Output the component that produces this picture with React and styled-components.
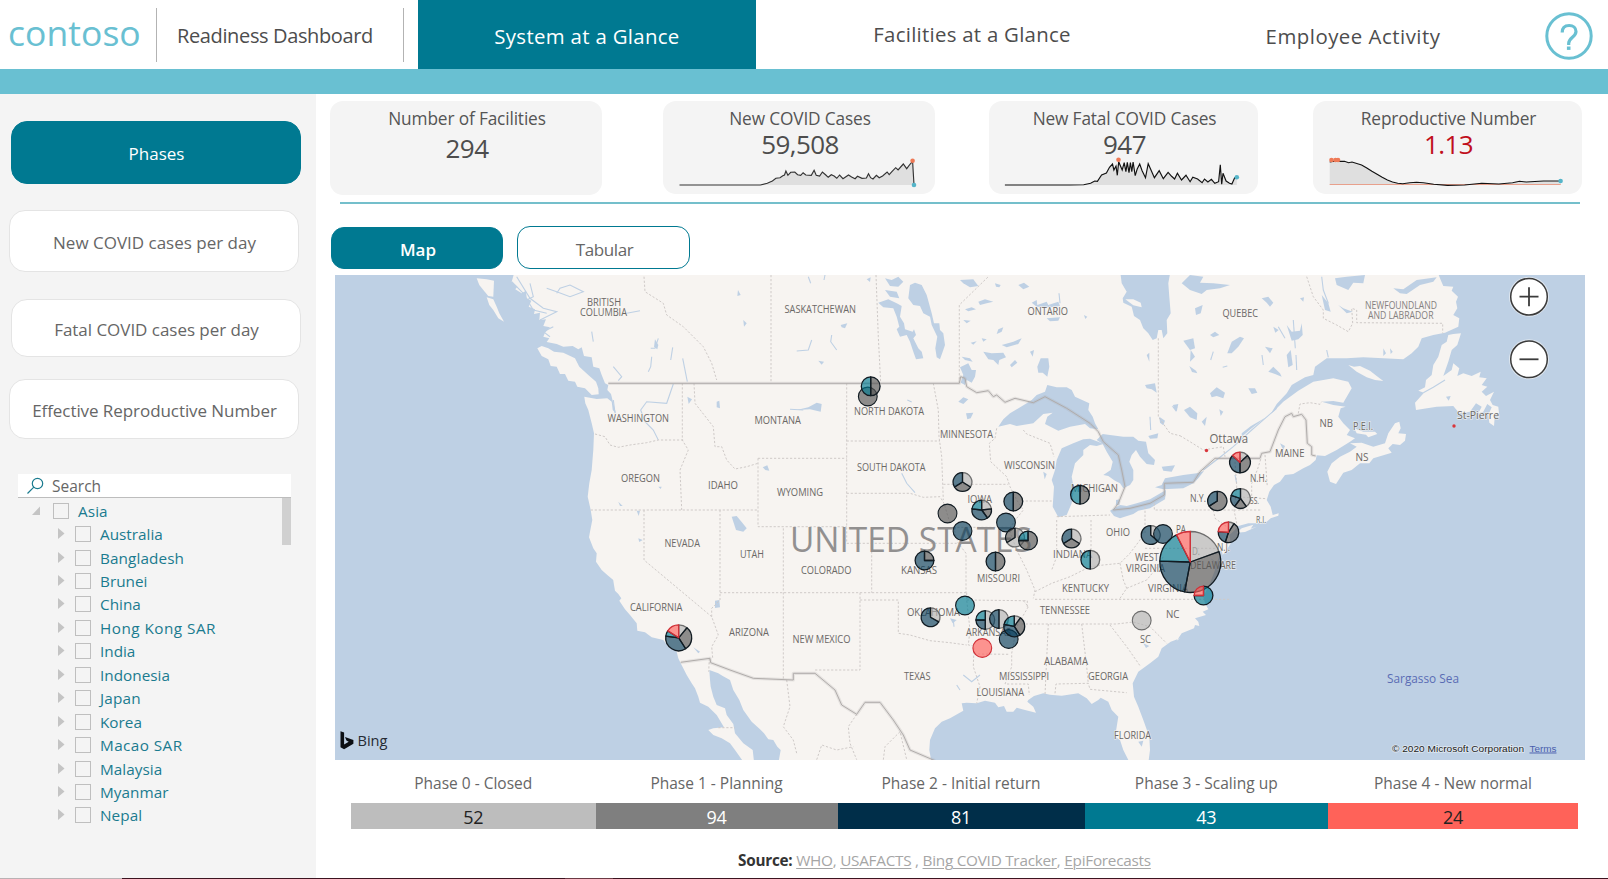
import React from "react";
import styled, { createGlobalStyle } from "styled-components";

const C = {
  teal: "#007991",
  sky: "#69c0d2",
  panel: "#f4f4f4",
  text: "#4d4d4d",
  water: "#bed0e4",
  land: "#f7f4f1",
};

const Global = createGlobalStyle`
  * { box-sizing: border-box; }
  body { margin: 0; background: #fff; font-family: "Open Sans", "Noto Sans", sans-serif; color: ${C.text}; }
`;

const Page = styled.div`
  width: 1608px;
  height: 879px;
  overflow: hidden;
  display: flex;
  flex-direction: column;
`;

/* ---------- header ---------- */
const Header = styled.header`
  display: flex;
  height: 69px;
  flex: none;
`;
const Brand = styled.div`
  width: 156px;
  padding: 8px 0 0 8px;
  font-size: 35.5px;
  line-height: 48px;
  letter-spacing: 0.05px;
  color: ${C.sky};
`;
const Divider = styled.i`
  width: 1px;
  height: 54px;
  margin-top: 8px;
  background: #b3b3b3;
`;
const Title = styled.div`
  width: 246px;
  padding: 21px 0 0 20px;
  font-size: 20px;
  line-height: 30px;
  letter-spacing: -0.37px;
  white-space: nowrap;
`;
const Tab = styled.div`
  width: ${(p) => p.$w}px;
  margin-left: ${(p) => p.$ml || 0}px;
  padding-top: ${(p) => p.$top}px;
  text-align: center;
  font-size: 20.4px;
  line-height: 30px;
  font-weight: ${(p) => (p.$active ? 500 : 400)};
  letter-spacing: ${(p) => p.$ls || 0}px;
  color: ${(p) => (p.$active ? "#fff" : C.text)};
  background: ${(p) => (p.$active ? C.teal : "transparent")};
`;
const Help = styled.div`
  width: 48px;
  height: 48px;
  margin: 12px 0 0 26.5px;
`;
const Band = styled.div`
  height: 25px;
  flex: none;
  background: ${C.sky};
`;

const Body = styled.div`
  display: flex;
  flex: 1;
`;

/* ---------- sidebar ---------- */
const Sidebar = styled.aside`
  width: 316px;
  padding-top: 27px;
  background: ${C.panel};
`;
const NavButton = styled.div`
  display: flex;
  align-items: center;
  justify-content: center;
  width: 290px;
  height: ${(p) => p.$h}px;
  margin: 0 0 ${(p) => p.$gap}px ${(p) => p.$ml}px;
  padding-top: ${(p) => p.$pt}px;
  padding-left: 1px;
  border-radius: 16px;
  border: 1px solid ${(p) => (p.$active ? C.teal : "#e4e4e4")};
  background: ${(p) => (p.$active ? C.teal : "#fff")};
  color: ${(p) => (p.$active ? "#fff" : "#666")};
  font-size: 17px;
  font-weight: ${(p) => (p.$active ? 500 : 400)};
  letter-spacing: ${(p) => p.$ls || 0}px;
  white-space: nowrap;
`;
const Slicer = styled.div`
  width: 273px;
  margin-left: 18px;
`;
const SearchBox = styled.div`
  display: flex;
  align-items: center;
  height: 24px;
  padding-left: 8px;
  gap: 8px;
  background: #fff;
  border-bottom: 1px solid #bdbdbd;
  font-size: 15.5px;
  color: #666;
`;
const TreeArea = styled.div`
  display: flex;
  justify-content: space-between;
`;
const Tree = styled.div`
  padding-top: 1px;
`;
const TreeRow = styled.div`
  display: flex;
  align-items: center;
  height: 23.45px;
  padding-left: ${(p) => (p.$root ? 13 : 39)}px;
  color: #1a7b8f;
  font-size: 15.3px;
  letter-spacing: ${(p) => p.$ls || 0}px;
  white-space: nowrap;
`;
const Arrow = styled.svg`
  width: 10px;
  height: 12px;
  margin-right: ${(p) => (p.$root ? 12 : 8)}px;
  fill: #c4c4c4;
`;
const Check = styled.i`
  width: 16px;
  height: 16px;
  margin-right: 9px;
  border: 1px solid #bfbfbf;
`;
const Thumb = styled.i`
  width: 9px;
  height: 47px;
  background: #d0d0d0;
`;

/* ---------- main ---------- */
const Main = styled.main`
  width: 1292px;
  padding: 7px 0 0 14px;
`;
const Kpis = styled.div`
  display: flex;
  align-items: flex-start;
  height: 101px;
`;
const Kpi = styled.section`
  width: ${(p) => p.$w}px;
  height: ${(p) => p.$h || 92.5}px;
  margin-left: ${(p) => p.$ml || 0}px;
  padding-top: 6px;
  border-radius: 13px;
  background: ${C.panel};
  text-align: center;
  overflow: hidden;
`;
const KpiLabel = styled.div`
  font-size: 17.3px;
  line-height: 24px;
  padding-left: 2px;
  letter-spacing: -0.15px;
  color: #555;
`;
const KpiValue = styled.div`
  font-size: 26px;
  line-height: 32px;
  margin-top: ${(p) => p.$mt}px;
  padding-left: 2px;
  letter-spacing: -0.6px;
  color: ${(p) => p.$color || C.text};
`;
const Spark = styled.svg`
  display: block;
  width: 100%;
  height: 34px;
  margin-top: -4px;
`;
const Rule = styled.div`
  width: 1240px;
  height: 2px;
  margin-left: 10px;
  background: #74bfcb;
`;
const Switch = styled.div`
  display: flex;
  align-items: center;
  gap: 14px;
  margin: 22px 0 6px 1px;
`;
const Pill = styled.div`
  width: ${(p) => (p.$active ? 172 : 173)}px;
  height: ${(p) => (p.$active ? 42 : 43)}px;
  padding: 3px 0 0 2px;
  display: flex;
  align-items: center;
  justify-content: center;
  border-radius: 13px;
  border: 1px solid ${C.teal};
  background: ${(p) => (p.$active ? C.teal : "#fff")};
  color: ${(p) => (p.$active ? "#fff" : "#666")};
  font-size: 17px;
  font-weight: ${(p) => (p.$active ? 600 : 400)};
  letter-spacing: ${(p) => (p.$active ? 0 : -0.4)}px;
`;
const MapSvg = styled.svg`
  display: block;
  width: 1250px;
  height: 485px;
  margin-left: 5px;
  background: ${C.water};
`;
const Phases = styled.div`
  display: grid;
  grid-template-columns: 244.5px 242px 247px 243.5px 250px;
  margin: 12px 0 0 21px;
`;
const PhaseName = styled.div`
  height: 31px;
  line-height: 22px;
  text-align: center;
  font-size: 15.5px;
  color: #666;
`;
const PhaseBar = styled.div`
  height: 25.5px;
  line-height: 28px;
  text-align: center;
  font-size: 18px;
  letter-spacing: -0.3px;
  background: ${(p) => p.$bg};
  color: ${(p) => p.$fg};
`;
const Source = styled.p`
  margin: 20.5px 0 0 408px;
  font-size: 15.3px;
  line-height: 22px;
  color: #a6a6a6;
  white-space: pre;
  letter-spacing: -0.25px;
  b { color: #333; }
  u { text-decoration-thickness: 1px; text-underline-offset: 2px; }
`;
const Footer = styled.div`
  height: 1px;
  flex: none;
  background: linear-gradient(to right, #b9b2b4 122px, #3b1420 122px 565px, #6a3a44 565px 613px, #3b1420 613px);
`;

/* ---------- map geometry: [originX, originY, points in thirds of a pixel] ---------- */
const NW = [330, 270], SW = [330, 520], N = [750, 270], S = [750, 520], NE = [1170, 270], SE = [1170, 520];
const pts = ([ox, oy], s) =>
  s.trim().split(/\s+/).map((p) => {
    const [x, y] = p.split(",").map(Number);
    return `${(ox + x / 3).toFixed(1)},${(oy + y / 3).toFixed(1)}`;
  }).join(" ");

const mainland = [
  [NW, "555,0 545,35 562,50 556,58 575,70 588,62 590,85 604,92 596,110 615,118 612,132 630,128 628,150 648,148 640,168 660,172 645,188 640,200 658,205 650,216 680,222 700,230 728,228 745,238 755,232 762,258 785,262 790,290 808,295 815,315 825,340 835,345 832,360 843,372 850,400 858,430 848,420 845,395 832,385 800,387 763,380 766,400 775,420 785,460 792,490 790,540 785,600 778,640 773,680 782,720 787,750"],
  [SW, "787,0 780,35 777,52 790,85 800,100 798,125 815,150 832,165 850,180 862,195 858,185 848,170 852,195 855,212 865,222 874,235 868,242 885,268 900,285 920,310 922,332 945,337 965,352 1000,360 1015,380 1040,395 1045,415 1052,430 1070,465 1085,490 1095,505 1105,530 1110,548 1135,560 1160,585 1182,622 1150,625 1135,630 1150,645 1175,655 1200,670 1215,690 1240,725 1272,725 1268,690 1240,670 1215,640 1210,612 1190,585 1185,565 1160,555 1150,530 1142,500 1140,480 1138,450 1165,460 1178,468 1200,480 1210,510 1228,540 1240,570 1265,605 1290,628"],
  [S, "42,640 55,658 70,660 82,680 92,690 85,730 545,730 538,690 540,660 555,625 575,605 600,595 640,572 635,550 650,548 680,550 705,542 735,548 745,562 762,558 770,575 790,575 800,563 825,570 858,578 850,560 832,545 835,540 852,528 880,520 900,524 935,527 985,520 1010,535 1025,552 1045,540 1052,533 1075,545 1085,570 1105,590 1100,620 1095,650 1110,660 1120,690 1140,730 1195,730 1200,690 1198,650 1180,600 1165,560 1152,530 1148,490 1165,455 1200,430 1225,410 1235,385 1262,365 1290,355"],
  [SE, "20,362 35,340 72,325 75,315 88,318 85,305 75,295 108,285 98,275 115,268 105,250 100,230 120,190 135,150 132,130 122,115 140,128 150,105 140,95 155,90 158,105 170,90 182,70 178,45 192,32"],
  [NE, "205,768 235,760 262,760 290,755 302,745 325,737 326,730 308,735 302,710 290,690 298,665 312,645 330,635 345,615 370,612 400,595 420,585 437,570 440,556 465,558 500,540 540,515 555,505 530,495 540,480 520,460 505,440 512,415 527,410 490,405 455,395 490,393 520,398 545,355 535,335 490,325 430,335 385,362 340,395 310,425 245,475 215,500 215,490 243,468 300,435 320,402 350,370 365,345 405,322 430,315 435,290 470,265 530,265 580,262 640,265 700,268 725,250 745,230 755,205 790,195 825,188 865,170 868,145 850,135 862,115 858,95 864,80 845,62 850,50 820,48 812,30 800,0"],
].map(([o, s]) => pts(o, s)).join(" ");

const islands = [
  [NE, "873,190 850,192 835,195 830,215 815,225 805,260 790,285 785,315 768,330 765,352 745,362 762,368 735,398 738,420 800,410 850,408 868,430 900,425 918,400 935,410 925,430 940,425 952,402 965,412 955,435 958,458 972,468 975,430 987,430 985,410 968,405 960,390 972,365 948,378 935,365 952,350 935,345 950,325 928,322 932,305 905,318 880,310 862,318 868,295 850,280 845,300 820,318 835,275 845,240 862,225"],
  [NE, "535,285 552,290 570,288 600,302 620,318 640,333 615,330 590,322 560,305"],
  [NE, "550,470 560,478 580,485 615,485 622,492 595,502 588,494 560,490"],
  [NE, "472,605 485,580 510,560 540,545 560,530 540,520 575,518 610,530 645,520 655,490 675,460 688,455 692,475 685,490 708,492 705,512 690,525 668,522 655,535 665,548 610,565 598,580 570,580 545,600 520,608 498,642 480,635"],
  [NW, "622,235 635,228 655,235 672,245 700,248 735,265 748,290 775,315 798,335 805,355 806,373 785,375 765,355 742,350 735,335 715,332 705,312 690,312 680,290 662,288 655,268 635,258"],
  [NW, "440,25 470,28 492,32 490,80 475,78 460,60 448,45"],
  [NW, "470,82 490,88 500,110 508,130 522,155 505,145 490,120 478,105"],
  [SE, "200,38 215,25 250,14 242,26 260,20 225,36"],
];
const lakes = [
  [N, "1110,0 1262,0 1255,40 1258,80 1262,130 1250,150 1252,190 1240,205 1235,180 1225,180 1220,205 1208,210 1195,190 1180,175 1170,150 1152,138 1145,110 1120,98 1118,85 1130,65 1115,40"],
  [N, "480,45 495,38 515,45 530,75 545,130 552,160 568,160 570,180 580,190 585,225 578,245 570,268 560,262 556,235 562,200 545,165 540,140 520,130 510,108 490,105 475,85"],
  [N, "385,98 415,88 440,100 455,108 450,140 462,160 465,178 488,185 492,178 498,195 490,205 505,235 515,245 520,265 498,268 490,245 480,215 470,195 450,200 440,178 448,170 440,140 430,115 400,112"],
  [N, "405,60 440,65 448,85 420,80"], [N, "405,25 425,30 445,20 460,35 445,50 420,48"],
  [N, "745,470 760,448 780,430 830,400 845,390 860,375 885,365 892,345 920,352 950,352 965,360 975,380 1018,400 1015,420 1028,440 1035,460 1045,478 1020,475 1005,462 960,470 925,482 885,462 892,440 908,428 880,432 850,460 800,468 780,462"],
  [N, "920,570 935,535 970,520 1000,508 1020,506 1045,515 1060,522 1040,528 1020,525 1000,540 1000,555 975,580 965,620 972,660 965,700 950,735 925,742 908,710 912,650 905,630 915,600"],
  [N, "1040,510 1058,492 1080,495 1120,500 1150,500 1165,512 1188,515 1195,550 1215,570 1212,585 1190,582 1170,560 1158,540 1145,555 1138,575 1150,600 1150,630 1140,645 1120,655 1110,640 1095,632 1075,618 1060,615 1082,600 1088,575 1070,545 1058,522"],
  [N, "1098,690 1110,688 1108,705 1098,705"],
  [N, "1080,722 1110,705 1130,708 1160,700 1200,688 1222,675 1248,660 1245,688 1200,715 1165,722 1150,732 1110,745 1092,738"],
  [N, "1215,652 1235,645 1245,625 1300,615 1340,610 1362,603 1345,625 1330,640 1300,655 1240,658"],
  [N, "630,292 655,280 665,300 678,300 675,320 665,338 650,330 645,345 632,338 640,315"],
  [N, "862,290 872,265 895,265 898,290 892,320 878,308 865,308"],
  [N, "700,245 725,250 760,248 768,262 748,270 745,285 730,270 715,268"],
  [N, "630,30 670,28 685,48 660,52 640,40"], [N, "805,45 822,38 838,50 820,58"], [N, "735,40 752,45 748,52 738,50"],
  [N, "685,95 705,88 730,95 710,100 690,105"], [N, "645,118 665,112 678,118 655,124"], [N, "745,178 760,172 755,185 740,192"],
  [N, "755,225 790,215 815,205 805,222 770,232"], [N, "635,260 660,265 668,275 645,270"], [N, "840,245 852,240 848,260"],
  [N, "780,285 795,270 802,278 785,292"], [N, "640,150 662,152 650,160"], [N, "662,218 680,214 670,224"], [N, "695,205 710,208 700,215"],
  [N, "845,98 860,90 862,105 890,95 895,105 925,95 930,108 900,112 860,110"], [N, "890,145 930,142 925,152 900,154"],
  [N, "1002,135 1012,140 1006,147"], [N, "272,165 292,160 285,175 275,172"], [N, "350,28 362,22 360,36"],
  [N, "625,395 640,382 655,388 640,402"], [N, "648,430 670,428 662,445 652,448"],
  [N, "140,420 175,412 200,398 215,402 212,425 180,418"], [N, "38,592 52,586 58,602 46,600"], [N, "205,272 222,275 215,284"],
  [N, "1185,345 1215,340 1220,368 1205,358 1190,355"], [N, "1190,255 1198,248 1198,275"], [N, "1228,440 1245,452 1240,466 1230,458"],
  [N, "1268,405 1285,402 1280,425"], [N, "1195,498 1225,490 1222,505 1200,506"], [N, "1235,590 1275,586 1265,605 1240,602"], [N, "880,605 890,612 884,628"],
  [NW, "1205,740 1220,738 1238,760 1250,775 1240,785 1218,780"], [NW, "1160,395 1168,392 1170,415 1160,412"], [NW, "1072,380 1086,388 1076,402"],
  [NW, "1224,60 1232,75 1222,78"], [NW, "1240,150 1250,160 1242,170"], [NW, "865,695 878,708 870,708"], [NW, "985,650 995,650 992,657"],
  [NW, "920,722 930,722 926,738"], [NW, "975,208 985,225 982,238 972,230"],
  [SW, "1155,242 1168,240 1170,262 1155,264"], [SW, "1090,382 1110,395 1105,400"], [SW, "925,55 938,60 928,66"],
  [NE, "35,40 60,15 100,20 90,38 130,40 180,45 150,55 110,60 95,72 60,60"], [NE, "75,115 98,105 92,130 78,135"],
  [NE, "275,85 295,80 310,98 300,110 290,98"], [NE, "390,85 402,82 400,95"], [NE, "40,212 70,205 75,235 60,240"],
  [NE, "172,250 185,215 210,200 222,205 205,230 185,250"], [NE, "62,240 75,260 60,275"], [NE, "58,288 78,302 82,310 66,306"],
  [NE, "120,195 135,185 148,195 130,202"], [NE, "285,230 308,235 300,250"], [NE, "350,165 365,185 390,182 395,160 398,195 385,208 365,212"],
  [NE, "310,170 326,180 316,188"], [NE, "120,370 140,352 165,368 160,385 140,378 125,382"], [NE, "235,355 255,355 262,368 245,372"],
  [NE, "295,305 310,290 330,310 335,320 315,312"], [NE, "350,255 362,240 368,285 355,292"], [NE, "5,408 22,412 18,425"],
  [NE, "42,420 60,410 82,430 80,450 60,442"], [NE, "148,418 160,425 152,438"], [NE, "95,455 110,440 105,468"],
  [NE, "495,25 530,20 585,15 580,40 550,38 535,60 500,45"], [NE, "455,75 475,100 482,125 465,120"], [NE, "505,105 520,115 548,125 530,130"],
  [NE, "670,55 700,58 740,30 800,22 790,35 750,45 710,72 690,70"], [NE, "330,520 345,528 340,540"], [NE, "640,235 648,250 640,258"], [NE, "660,235 668,245 662,252"], [NE, "828,380 842,378 836,392"],
  [S, "1165,665 1180,662 1175,680"], [S, "600,295 620,300 608,310"], [S, "1180,370 1198,378 1188,384"],
];
const rivers = [
  [NW, "545,35 580,70 610,120 650,130"], [NW, "600,40 610,80 590,90"], [NW, "650,55 680,65 720,80 760,65 720,45 690,55 680,70"],
  [NW, "890,130 930,122"], [NW, "785,185 790,215"], [NW, "985,205 975,235 962,235"], [NW, "965,260 962,290 955,305"], [NW, "1028,232 1022,270"],
  [NW, "1058,265 1072,335"], [NW, "850,290 875,320 865,332"], [NW, "1030,342 1010,400 950,395 932,420 945,455 970,480 985,510"],
  [NW, "850,390 855,430"], [NW, "560,20 600,85 640,115 680,125 630,150"], [NW, "660,200 640,185 670,170"],
  [N, "140,243 175,240 185,210"], [N, "245,195 242,215 260,240"], [N, "455,610 470,640 495,668"], [N, "120,418 160,420"], [N, "175,20 182,40"], [N, "225,15 222,30"],
  [N, "927,70 930,100"], [N, "1200,440 1202,480"], [N, "472,390 485,396"],
  [NE, "320,415 245,480 190,530 150,562 100,600"], [NE, "370,150 376,235"], [NE, "276,255 280,285"], [NE, "378,255 380,300"], [NE, "325,170 345,205"],
  [NE, "455,20 460,60 475,100"], [NE, "130,245 122,270"], [NE, "158,292 172,288"], [NE, "195,615 200,640"], [NE, "470,240 475,262"],
  [NE, "760,368 790,352 825,330"],
  [S, "640,465 665,485 690,465"], [S, "620,495 630,510"], [S, "610,300 612,320"],
];
const nation = [
  [[NW, "835,340 1290,340"], [N, "628,340 632,320 645,325 650,350 680,368 715,362 730,380 740,375 765,397 795,385 850,398 885,380 950,415 1020,460 1045,485 1060,515 1105,555 1115,600 1125,650 1105,700 1090,720 1140,715 1200,700 1243,675 1243,640 1330,637 1350,605 1395,565"], [NE, "270,565 275,550 300,545 325,480 345,440 365,430 370,440 395,433 408,450 412,520 425,530 425,555 437,558"]],
  [[SW, "1052,427 1140,415 1142,428 1200,450 1270,475"], [S, "130,480 130,460 195,460 255,510 275,555 320,583 345,547 390,547 430,600 460,645 480,690 555,722"]],
];
const states = [
  [NW, "795,492 825,500 840,525 865,532 900,525 950,518 985,510 1060,510"], [NW, "1057,340 1057,510 1075,540 1050,600 1055,720"], [NW, "782,720 1284,720"],
  [NW, "1092,340 1095,400 1150,470 1155,530 1175,530 1190,570 1215,597 1250,590 1284,580"], [NW, "1284,565 1284,770 1550,770"],
  [N, "24,565 290,565"], [SW, "1170,-30 1170,240 1145,265 1145,290"], [SW, "1170,218 1910,218"], [SW, "942,-30 942,120 1145,290 1165,345 1145,380 1148,415"],
  [SW, "1138,415 1136,455"], [SW, "1165,623 1215,623"],
  [S, "100,25 100,480"], [N, "290,340 290,770"], [N, "290,513 570,513"], [N, "290,670 480,670 520,682 570,680 582,700 600,760"],
  [N, "550,340 565,420 567,500 575,560 580,690"], [N, "580,643 775,643"], [N, "740,475 735,505 718,520 722,575 770,620 780,650 800,690 820,720 800,745 775,780"],
  [N, "815,693 905,693"], [N, "820,480 830,492 900,520 912,560"], [S, "290,22 290,70 620,70"], [S, "365,70 365,218"], [S, "610,20 625,70 648,100 648,218"], [S, "610,22 775,22"],
  [S, "775,22 800,90 830,150 855,210 850,235"], [S, "650,240 820,242"], [S, "330,240 445,240 445,340 480,345 540,362 600,368 650,375"], [S, "330,218 330,450 195,450"],
  [S, "650,218 650,240 660,330 655,375 672,378 670,440 690,500 680,550"], [S, "672,402 780,403"], [S, "820,242 835,260 800,320 785,400 785,440 765,492 835,492 838,525"],
  [S, "820,242 832,242 832,262"], [S, "855,238 1440,238"], [S, "815,312 1100,312 1150,306 1200,320 1250,370"], [S, "895,312 885,525"], [S, "995,312 1010,440 1015,492"],
  [S, "915,520 918,492 1015,490 1020,508 1130,518"], [S, "1080,315 1130,380 1172,440"], [S, "920,0 920,110 905,150"], [S, "1023,0 1023,120"],
  [S, "855,215 905,190 960,170 1020,140 1060,135 1110,130 1140,100 1170,60 1185,20"], [S, "1110,235 1130,205 1190,180 1215,150 1240,110"], [S, "1110,130 1120,180 1130,205"],
  [N, "1185,710 1185,790"], [S, "1185,85 1400,85"], [N, "920,740 1080,735"], [N, "1213,700 1213,720 1450,720"],
  [NE, "195,575 200,650 192,720 200,760"], [NE, "272,568 262,600 245,640 245,680"], [NE, "285,555 292,650"], [NE, "195,680 290,686"], [NE, "192,720 275,720"], [NE, "130,720 135,745 170,770"],
  [NW, "942,20 945,65 1000,100 1010,135 1060,170 1120,230 1145,280 1160,330"], [N, "63,15 63,340"], [N, "378,15 385,200 392,340"], [N, "628,340 628,105 715,20"],
  [N, "1225,205 1225,440 1260,490 1290,497"], [NE, "30,497 60,515 100,540 160,530 165,560"], [NE, "410,20 430,80 460,120 460,145 500,165 535,185 548,160 545,115 560,120 560,158 818,160 818,190"],
  [NE, "385,430 390,402 420,398 450,403 455,395"], [S, "110,480 120,560 100,620 130,660 140,700"], [S, "320,583 295,620 300,670 320,719"], [S, "200,719 215,675 260,690 310,680"], [S, "400,719 405,680 450,635 470,719"],
];

/* text, left, right, baseline, size, colour */
const labels = [
  ["BRITISH", 587, 621, 306, 11], ["COLUMBIA", 580, 627, 316.3, 11], ["WASHINGTON", 607.5, 669, 422], ["OREGON", 621, 660, 482], ["IDAHO", 708, 738, 488.7],
  ["NEVADA", 664.5, 700, 547], ["UTAH", 740, 764, 558], ["CALIFORNIA", 630, 682.5, 611.3], ["ARIZONA", 729, 769, 636], ["MONTANA", 754.5, 801, 424],
  ["SASKATCHEWAN", 784.5, 856, 312.7], ["ONTARIO", 1027.5, 1068, 315], ["NORTH DAKOTA", 854, 924, 415], ["MINNESOTA", 940, 993, 437.5], ["SOUTH DAKOTA", 857, 925.5, 471],
  ["WYOMING", 777, 823, 495.5], ["WISCONSIN", 1004, 1055, 469], ["MICHIGAN", 1071, 1118, 491.5], ["IOWA", 967.5, 992, 502.5], ["OHIO", 1106, 1130, 535.5],
  ["COLORADO", 801, 851.5, 573.5], ["KANSAS", 901, 937, 573.5], ["MISSOURI", 977, 1020, 582.3], ["INDIANA", 1053, 1092, 558], ["KENTUCKY", 1062, 1109, 591.7],
  ["WEST", 1135, 1159, 561], ["VIRGINIA", 1126, 1165, 571.5], ["VIRGINIA", 1148, 1188, 591.7], ["TENNESSEE", 1040, 1090, 613.7], ["NC", 1166, 1179.5, 618],
  ["OKLAHOMA", 907, 960, 616], ["ARKANSAS", 966, 1011, 636], ["SC", 1140, 1151, 642.7], ["NEW MEXICO", 792.5, 850.5, 642.7], ["TEXAS", 904, 930.5, 680.3],
  ["MISSISSIPPI", 999, 1049, 680.3], ["ALABAMA", 1044, 1088, 664.7], ["GEORGIA", 1088, 1128, 680.3], ["LOUISIANA", 976.5, 1024, 696], ["FLORIDA", 1114, 1151, 738.5],
  ["QUEBEC", 1222.5, 1258, 316.7], ["NEWFOUNDLAND", 1365, 1437, 309, 10, "#85817f"], ["AND LABRADOR", 1368, 1433.5, 319, 10, "#85817f"],
  ["NB", 1319.5, 1333, 427.3], ["P.E.I.", 1353, 1373, 429.5, 10.5], ["NS", 1355.5, 1368.5, 460.5], ["MAINE", 1275, 1304.5, 457.3], ["Ottawa", 1209.5, 1248, 442.7, 12.5],
  ["St-Pierre", 1457, 1499, 418.7, 11.5], ["N.H.", 1250, 1267, 482], ["N.Y.", 1190, 1206, 502], ["SS.", 1250, 1259, 504.3, 8.5], ["R.I.", 1256, 1266, 522.5, 8.5],
  ["PA", 1176, 1186, 532.5], ["N.J.", 1217, 1230, 550.5], ["D.", 1192, 1200, 555, 11], ["DELAWARE", 1190, 1236, 568.7],
];

const PH = { closed: "#b3b3b3", plan: "#545454", init: "#083e5a", scale: "#007991", normal: "#ff5f5a" };
/* cx, cy, r, slices clockwise from noon */
const pies = [
  [867.8, 396.5, 9.4, [["plan", 1]]], [870.7, 386.3, 9.4, [["plan", 0.5], ["scale", 0.5]]],
  [962.5, 482, 9.4, [["closed", 0.34], ["plan", 0.32], ["init", 0.34]]], [947.5, 513.5, 9.4, [["plan", 1]]],
  [981.7, 510, 9.8, [["closed", 0.23], ["plan", 0.17], ["init", 0.37], ["scale", 0.23]]], [1013.3, 501.5, 9.4, [["plan", 0.5], ["init", 0.5]]],
  [1006, 522.5, 9.4, [["init", 1]]], [962.5, 531, 9.4, [["init", 1]]], [1015, 537.5, 9.4, [["closed", 0.66], ["plan", 0.34]]],
  [1028, 540.5, 9.4, [["plan", 0.75], ["scale", 0.25]]], [1071.5, 538.5, 9.4, [["closed", 0.34], ["plan", 0.32], ["init", 0.34]]],
  [1090.3, 559.7, 9.4, [["closed", 0.5], ["scale", 0.5]]], [924.5, 560.5, 9.4, [["plan", 0.25], ["init", 0.75]]], [995.5, 561.5, 9.4, [["plan", 0.5], ["init", 0.5]]],
  [965, 605.5, 9.4, [["scale", 1]]], [930.5, 617.3, 9.4, [["closed", 0.33], ["init", 0.67]]], [985.3, 620, 9.4, [["closed", 0.5], ["init", 0.25], ["scale", 0.25]]],
  [999, 619, 9.4, [["closed", 0.5], ["init", 0.5]]], [1008.7, 639, 9.4, [["init", 1]]], [1014.3, 626.3, 10.4, [["closed", 0.1], ["plan", 0.31], ["init", 0.37], ["scale", 0.22]]],
  [982.3, 648, 9.4, [["normal", 1]]], [1141.7, 620.5, 9.4, [["closed", 1]]], [1080, 494.7, 9.4, [["plan", 0.5], ["scale", 0.5]]],
  [678.7, 637.8, 13, [["closed", 0.11], ["plan", 0.3], ["init", 0.36], ["scale", 0.07], ["normal", 0.16]]],
  [1240, 462.5, 10.3, [["closed", 0.13], ["plan", 0.37], ["init", 0.37], ["normal", 0.13]]], [1217.3, 501, 9.6, [["plan", 0.66], ["init", 0.34]]],
  [1240.5, 498.5, 9.8, [["closed", 0.4], ["plan", 0.2], ["init", 0.2], ["scale", 0.2]]],
  [1228.5, 532.3, 10.3, [["closed", 0.09], ["plan", 0.46], ["init", 0.21], ["normal", 0.24]]],
  [1150.7, 535, 9.4, [["closed", 0.36], ["init", 0.64]]], [1163, 534, 9.4, [["init", 1]]],
  [1190.3, 562, 30.5, [["closed", 0.195], ["plan", 0.335], ["init", 0.225], ["scale", 0.17], ["normal", 0.075]]],
  [1203.5, 595.5, 9.4, [["scale", 0.75], ["normal", 0.25]]],
];

function Pie({ cx, cy, r, slices }) {
  const edge = (k) => (k === "normal" ? "#d03038" : k === "closed" ? "#6d6d6d" : "#111b22");
  if (slices.length === 1)
    return <circle cx={cx} cy={cy} r={r} fill={PH[slices[0][0]]} fillOpacity=".65" stroke={edge(slices[0][0])} strokeWidth="1.1" />;
  let a = 0;
  const at = (f) => [cx + r * Math.sin(f * 2 * Math.PI), cy - r * Math.cos(f * 2 * Math.PI)];
  return (
    <g strokeWidth="1.3" strokeLinejoin="round" fillOpacity=".65">
      {slices.map(([k, f], i) => {
        const [x0, y0] = at(a);
        a += f;
        const [x1, y1] = at(a);
        return <path key={i} d={`M${cx},${cy}L${x0},${y0}A${r},${r} 0 ${f > 0.5 ? 1 : 0} 1 ${x1},${y1}Z`} fill={PH[k]} stroke={edge(k)} />;
      })}
    </g>
  );
}

function ZoomButton({ y, plus }) {
  return (
    <g>
      <circle cx="1529" cy={y} r="20" fill="#dfe6ee" />
      <circle cx="1529" cy={y} r="18.3" fill="#fff" stroke="#3b3b3b" strokeWidth="1.5" />
      <path d={`M1519.5 ${y}h19${plus ? `M1529 ${y - 9.5}v19` : ""}`} stroke="#3b3b3b" strokeWidth="1.8" />
    </g>
  );
}

function FacilityMap() {
  return (
    <MapSvg viewBox="335 275 1250 485">
      <polygon points={mainland} fill={C.land} />
      {islands.map(([o, s], i) => <polygon key={i} points={pts(o, s)} fill={C.land} />)}
      {lakes.map(([o, s], i) => <polygon key={i} points={pts(o, s)} fill={C.water} />)}
      <polygon points={pts(N, "1126,88 1150,88 1172,98 1175,112 1150,106")} fill={C.land} />
      <g fill="none" stroke={C.water} strokeWidth="1.1">
        {rivers.map(([o, s], i) => <polyline key={i} points={pts(o, s)} />)}
      </g>
      <g fill="none" stroke="#cfcac8" strokeWidth="1" strokeDasharray="2.2 1.8">
        {states.map(([o, s], i) => <polyline key={i} points={pts(o, s)} />)}
      </g>
      {nation.map((segs, i) => {
        const p = segs.map(([o, s]) => pts(o, s)).join(" ");
        return (
          <g key={i} fill="none" strokeLinejoin="round">
            <polyline points={p} stroke="#a9a4a2" strokeOpacity=".22" strokeWidth="3.2" />
            <polyline points={p} stroke="#b0acaa" strokeWidth="1" />
          </g>
        );
      })}
      <g fontFamily="Open Sans, Noto Sans, sans-serif">
        {labels.map(([t, x0, x1, y, size = 11.5, fill = "#6b6866"], i) => (
          <text key={i} x={x0} y={y} fontSize={size} fill={fill} textLength={x1 - x0} lengthAdjust="spacingAndGlyphs"
            stroke={C.land} strokeWidth="1.6" strokeOpacity=".7" paintOrder="stroke">{t}</text>
        ))}
        <text x="790" y="551.5" fontSize="34.5" fill="#929090" textLength="242" lengthAdjust="spacingAndGlyphs">UNITED STATES</text>
        <text x="1387" y="682.5" fontSize="12" fill="#5a6cb4" textLength="72" lengthAdjust="spacingAndGlyphs">Sargasso Sea</text>
      </g>
      <circle cx="1206.5" cy="450.5" r="1.7" fill="#d9363c" />
      <circle cx="1454" cy="426" r="1.7" fill="#d9363c" />
      {pies.map(([cx, cy, r, slices], i) => <Pie key={i} cx={cx} cy={cy} r={r} slices={slices} />)}
      <ZoomButton y={296.7} plus />
      <ZoomButton y={359.3} />
      <path d="M340.5 731.2l3.6 1.2v12l4.6-2.7-2.3-1.1-1.4-3.6 8.4 3v3.8l-9.3 5.4-3.6-2z" fill="#0b0f14" />
      <text x="357.5" y="745.6" fontSize="15" fill="#252b33" textLength="30" lengthAdjust="spacingAndGlyphs" fontFamily="Open Sans, sans-serif">Bing</text>
      <g fontFamily="Liberation Sans, sans-serif" fontSize="9.6">
        <text x="1392" y="751.5" fill="#222" stroke="#fff" strokeWidth="1.6" strokeOpacity=".5" paintOrder="stroke" textLength="132" lengthAdjust="spacingAndGlyphs">© 2020 Microsoft Corporation</text>
        <text x="1529.5" y="751.5" fill="#4a5fae" textDecoration="underline" textLength="27" lengthAdjust="spacingAndGlyphs">Terms</text>
      </g>
    </MapSvg>
  );
}

/* sparkline points, scaled down to pixels */
const line = (ox, kx, s) =>
  s.trim().split(/\s+/).map((p) => {
    const [x, y] = p.split(",").map(Number);
    return `${(ox + x / kx).toFixed(1)},${(y / 3).toFixed(1)}`;
  });
const casesLine = line(540, 2.904, "405,555 640,555 660,550 675,543 685,535 697,533 705,527 710,525 714,513 720,526 728,517 740,516 748,524 757,526 764,518 772,525 788,526 796,511 802,526 812,528 820,516 830,525 837,532 846,524 854,528 862,535 870,525 880,536 896,525 905,531 915,536 922,529 935,535 948,534 954,521 960,533 967,537 977,526 985,533 995,528 1008,516 1014,524 1022,515 1033,503 1040,510 1055,492 1065,506 1075,492 1082,484 1084,520 1086,554");
const fatalLine = [
  ...line(540, 2.904, "1350,555 1500,555 1539,555"),
  ...line(1070, 2.9145, "0,555 40,554 60,550 72,543 80,544 92,525 106,519 115,502 124,492 128,510 134,498 138,526 142,485 148,500 152,510 158,488 163,515 167,487 172,518 176,488 180,515 184,486 190,527 196,507 203,492 210,512 220,533 228,491 236,510 246,533 260,512 272,536 286,517 296,529 305,537 313,520 325,540 338,526 350,545 358,532 372,537 385,548 392,537 402,546 412,538 422,550 433,545 438,494 442,553 446,520 455,543 465,550 472,552 480,533 486,530"),
];
const rtLine = line(1070, 2.9145, "757,486 770,484 800,484 812,488 822,486 850,495 865,504 880,514 895,523 910,532 925,540 940,546 955,550 970,551 990,548 1010,547 1030,548 1060,553 1100,556 1150,555 1200,550 1250,552 1290,548 1310,544 1330,546 1380,543 1430,543");

function Sparkline({ x, w, data, base = 185, color = "#111", dots, axis }) {
  const first = data[0].split(",")[0];
  const last = data[data.length - 1].split(",")[0];
  return (
    <Spark viewBox={`${x} 156 ${w} 34`}>
      <polygon points={`${first},${base} ${data.join(" ")} ${last},${base}`} fill="#dfdfdf" />
      {axis && <path d={`M${first} 184.500H${last}`} stroke="#e8a08c" strokeWidth="1" />}
      <polyline points={data.join(" ")} fill="none" stroke={color} strokeWidth="1.15" />
      {dots.map(([cx, cy, f], i) => <circle key={i} cx={cx} cy={cy} r="2.3" fill={f} />)}
    </Spark>
  );
}

/* name, tracking */
const countries = [
  ["Australia", 0], ["Bangladesh", 0.1], ["Brunei", 0], ["China", 0], ["Hong Kong SAR", 0.47], ["India", 0], ["Indonesia", 0.02],
  ["Japan", 0.2], ["Korea", 0], ["Macao SAR", 0.42], ["Malaysia", 0.05], ["Myanmar", 0.05], ["Nepal", 0.1],
];
const phases = [
  ["Phase 0 - Closed", 52, "#bdbdbd", "#222"],
  ["Phase 1 - Planning", 94, "#7f7f7f", "#fff"],
  ["Phase 2 - Initial return", 81, "#002e49", "#fff"],
  ["Phase 3 - Scaling up", 43, "#007991", "#fff"],
  ["Phase 4 - New normal", 24, "#ff6259", "#222"],
];
const orange = "#ee7a57";
const cyan = "#55b5c9";

export default function App() {
  return (
    <Page>
      <Global />
      <Header>
        <Brand>contoso</Brand>
        <Divider />
        <Title>Readiness Dashboard</Title>
        <Divider />
        <Tab $w={338} $ml={14} $top={21} $ls={0.32} $active>System at a Glance</Tab>
        <Tab $w={432} $top={19} $ls={0.27}>Facilities at a Glance</Tab>
        <Tab $w={330} $top={21} $ls={0.5}>Employee Activity</Tab>
        <Help>
          <svg width="48" height="48" viewBox="0 0 48 48" fill="none" stroke={C.sky}>
            <circle cx="24" cy="24" r="22.2" strokeWidth="3" />
            <path d="M17.2 20.5c0-4.6 2.8-7 7-7 4 0 6.8 2.3 6.8 6 0 5.4-7.3 6-7.3 11.800v1.800" strokeWidth="3.200" />
            <path d="M23.700 34.500v3.400" strokeWidth="3.600" />
          </svg>
        </Help>
      </Header>
      <Band />
      <Body>
        <Sidebar>
          <NavButton $h={63} $gap={26} $ml={11} $pt={1} $active>Phases</NavButton>
          <NavButton $h={62} $gap={26.5} $ml={9} $pt={3}>New COVID cases per day</NavButton>
          <NavButton $h={58} $gap={22.5} $ml={11} $pt={3} $ls={-0.03}>Fatal COVID cases per day</NavButton>
          <NavButton $h={59.5} $gap={35.5} $ml={9} $pt={4} $ls={-0.07}>Effective Reproductive Number</NavButton>
          <Slicer>
            <SearchBox>
              <svg width="18" height="18" viewBox="0 0 18 18" fill="none" stroke="#1a7b8f" strokeWidth="1.2">
                <circle cx="11.5" cy="6.5" r="5.2" />
                <path d="M7.8 10.2L1.5 16.5" />
              </svg>
              Search
            </SearchBox>
            <TreeArea>
              <Tree>
                <TreeRow $root $ls={0.1}>
                  <Arrow $root viewBox="0 0 10 12"><path d="M9 1.5v8.5H1z" /></Arrow>
                  <Check />Asia
                </TreeRow>
                {countries.map(([name, ls]) => (
                  <TreeRow key={name} $ls={ls}>
                    <Arrow viewBox="0 0 10 12"><path d="M1 0l6.5 5.5L1 11z" /></Arrow>
                    <Check />{name}
                  </TreeRow>
                ))}
              </Tree>
              <Thumb />
            </TreeArea>
          </Slicer>
        </Sidebar>
        <Main>
          <Kpis>
            <Kpi $w={272} $h={93.5}>
              <KpiLabel>Number of Facilities</KpiLabel>
              <KpiValue $mt={1}>294</KpiValue>
            </Kpi>
            <Kpi $w={272} $ml={61}>
              <KpiLabel>New COVID Cases</KpiLabel>
              <KpiValue $mt={-3}>59,508</KpiValue>
              <Sparkline x={663} w={272} data={casesLine} color="#333" dots={[[912.6, 160.8, orange], [914, 185, cyan]]} />
            </Kpi>
            <Kpi $w={269} $ml={54}>
              <KpiLabel>New Fatal COVID Cases</KpiLabel>
              <KpiValue $mt={-3}>947</KpiValue>
              <Sparkline x={989} w={269} data={fatalLine} dots={[[1118.5, 159.8, orange], [1236.8, 177.2, cyan]]} />
            </Kpi>
            <Kpi $w={269} $ml={55}>
              <KpiLabel>Reproductive Number</KpiLabel>
              <KpiValue $mt={-3} $color="#c00f1c">1.13</KpiValue>
              <Sparkline x={1313} w={269} data={rtLine} axis dots={[[1331.5, 160, orange], [1335.5, 160, orange], [1338, 160, orange], [1560.6, 181, cyan]]} />
            </Kpi>
          </Kpis>
          <Rule />
          <Switch>
            <Pill $active>Map</Pill>
            <Pill>Tabular</Pill>
          </Switch>
          <FacilityMap />
          <Phases>
            {phases.map(([n]) => <PhaseName key={n}>{n}</PhaseName>)}
            {phases.map(([n, v, bg, fg]) => <PhaseBar key={n} $bg={bg} $fg={fg}>{v}</PhaseBar>)}
          </Phases>
          <Source>
            <b>Source:</b> <u>WHO</u>, <u>USAFACTS</u> , <u>Bing COVID Tracker</u>, <u>EpiForecasts</u>
          </Source>
        </Main>
      </Body>
      <Footer />
    </Page>
  );
}
